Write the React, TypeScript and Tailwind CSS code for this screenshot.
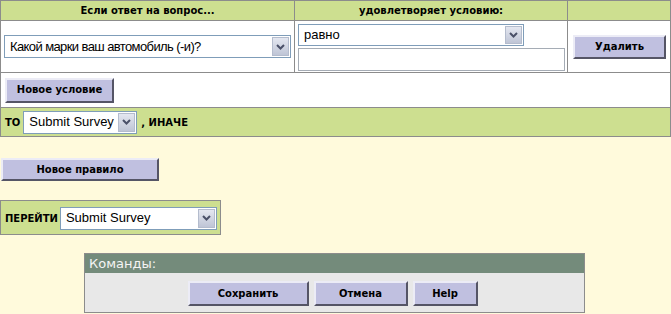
import React from "react";

const font = { fontFamily: '"DejaVu Sans", Verdana, sans-serif' };
const selFont = { fontFamily: '"Liberation Sans", Arial, sans-serif' };

function Btn({ label, className }: { label: string; className: string }) {
  return (
    <button
      className={
        "bg-[#c0c0e0] border-2 border-solid border-t-[#ececf6] border-l-[#ececf6] border-r-[#555566] border-b-[#555566] text-[10px] font-bold text-black flex items-center justify-center leading-none " +
        className
      }
    >
      {label}
    </button>
  );
}

function Chevron() {
  return (
    <svg width="9" height="6" viewBox="0 0 9 6">
      <path d="M1 1 L4.5 4.5 L8 1" fill="none" stroke="#4a5068" strokeWidth="2" />
    </svg>
  );
}

function FakeSelect({ text, className, textClass = "" }: { text: string; className: string; textClass?: string }) {
  return (
    <div className={"flex items-stretch border border-[#7f9db9] bg-white font-normal " + className}>
      <span
        className={"flex-1 flex items-center pl-[5px] text-[13px] text-black whitespace-nowrap overflow-hidden " + textClass}
        style={selFont}
      >
        {text}
      </span>
      <span className="w-[17px] m-[1px] flex items-center justify-center border border-[#b4bccd] bg-gradient-to-b from-[#e4e7f0] to-[#bfc5d6]">
        <Chevron />
      </span>
    </div>
  );
}

export default function App() {
  return (
    <div className="w-[671px] h-[314px] bg-[#fffadc] overflow-hidden" style={font}>
      <div className="border border-[#8c8c8c] w-[671px] bg-white">
        <div className="flex h-[20px] bg-[#cddf90] border-b border-[#8c8c8c] text-[10px] font-bold text-black">
          <div className="w-[294px] border-r border-[#8c8c8c] flex items-center justify-center">
            Если ответ на вопрос...
          </div>
          <div className="w-[273px] border-r border-[#8c8c8c] flex items-center justify-center">
            удовлетворяет условию:
          </div>
          <div className="flex-1" />
        </div>
        <div className="flex h-[52px] border-b border-[#8c8c8c]">
          <div className="w-[294px] border-r border-[#8c8c8c] flex items-center pl-[3px]">
            <FakeSelect
              text="Какой марки ваш автомобиль (-и)?"
              className="w-[287px] h-[23px]"
              textClass="tracking-[-0.6px]"
            />
          </div>
          <div className="w-[273px] border-r border-[#8c8c8c] flex flex-col pl-[3px] pt-[3px] gap-[2px]">
            <FakeSelect text="равно" className="w-[226px] h-[22px]" />
            <div className="w-[267px] h-[23px] border border-[#a5acb5] bg-white" />
          </div>
          <div className="flex-1 flex items-center pl-[5px]">
            <Btn label="Удалить" className="w-[93px] h-[24px]" />
          </div>
        </div>
        <div className="h-[35px] border-b border-[#8c8c8c] flex items-center pl-[4px]">
          <Btn label="Новое условие" className="w-[109px] h-[25px]" />
        </div>
        <div className="h-[28px] bg-[#cddf90] flex items-center pl-[4px] text-[10px] font-bold text-black">
          <span>ТО</span>
          <FakeSelect text="Submit Survey" className="w-[114px] h-[23px] ml-[3px]" />
          <span className="ml-[4px]">, ИНАЧЕ</span>
        </div>
      </div>

      <Btn label="Новое правило" className="w-[158px] h-[23px] mt-[21px] ml-[1px]" />

      <div className="mt-[19px] w-[221px] h-[35px] border border-[#8c8c8c] bg-[#cddf90] flex items-center pl-[4px] pt-[1px] text-[10px] font-bold text-black">
        <span>ПЕРЕЙТИ</span>
        <FakeSelect text="Submit Survey" className="w-[157px] h-[23px] ml-[2px]" />
      </div>

      <div className="mt-[18px] ml-[84px] w-[501px] h-[60px] border border-[#8c8c8c] bg-[#e8e8e8]">
        <div className="h-[19px] bg-[#748b7b] text-[#f4f4f4] text-[13px] flex items-center pl-[4px]">
          Команды:
        </div>
        <div className="flex justify-center gap-[5px] pt-[8px] pr-[4px]">
          <Btn label="Сохранить" className="w-[121px] h-[25px]" />
          <Btn label="Отмена" className="w-[94px] h-[25px]" />
          <Btn label="Help" className="w-[65px] h-[25px]" />
        </div>
      </div>
    </div>
  );
}
